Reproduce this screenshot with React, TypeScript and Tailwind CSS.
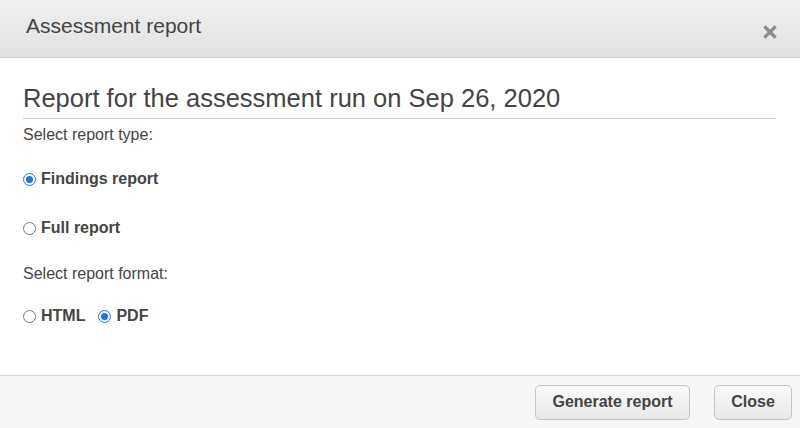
import React from "react";

function Radio({ checked }: { checked: boolean }) {
  return checked ? (
    <span className="inline-flex h-[13px] w-[13px] shrink-0 items-center justify-center rounded-full border-[1.5px] border-[#1a73e8] bg-white">
      <span className="h-[7px] w-[7px] rounded-full bg-[#1a73e8]" />
    </span>
  ) : (
    <span className="inline-block h-[13px] w-[13px] shrink-0 rounded-full border border-[#767676] bg-white" />
  );
}

export default function App() {
  return (
    <div
      className="flex h-[428px] w-[800px] flex-col bg-white text-[#444]"
      style={{ fontFamily: '"Liberation Sans", Arial, sans-serif' }}
    >
      <div className="flex h-[58px] shrink-0 items-start justify-between border-b border-[#cfcfcf] bg-gradient-to-b from-[#f0f0f0] to-[#e1e1e1] pl-[26px] pr-[23px]">
        <div className="pt-[13px] text-[21px] leading-[26px] text-[#444]">Assessment report</div>
        <div className="pt-[25px]">
          <svg width="14" height="14" viewBox="0 0 14 14">
            <path d="M2.5 2.5 L11.5 11.5 M11.5 2.5 L2.5 11.5" stroke="#8a8a8a" strokeWidth="3.2" strokeLinecap="square" />
          </svg>
        </div>
      </div>
      <div className="flex-1 pl-[23px] pr-[24px]">
        <div className="border-b border-[#cccccc] pt-[25px] pb-[4px] text-[25.5px] leading-[31px] text-[#444]">
          Report for the assessment run on Sep 26, 2020
        </div>
        <div className="pt-[7px] text-[16px] leading-[18px]">Select report type:</div>
        <label className="mt-[26px] flex items-center gap-[5px] text-[16px] font-bold leading-[18px]">
          <Radio checked />
          <span>Findings report</span>
        </label>
        <label className="mt-[31px] flex items-center gap-[5px] text-[16px] font-bold leading-[18px]">
          <Radio checked={false} />
          <span>Full report</span>
        </label>
        <div className="mt-[28px] text-[16px] leading-[18px]">Select report format:</div>
        <div className="mt-[24px] flex items-center gap-[13px] text-[16px] font-bold leading-[18px]">
          <label className="flex items-center gap-[5px]">
            <Radio checked={false} />
            <span>HTML</span>
          </label>
          <label className="flex items-center gap-[5px]">
            <Radio checked />
            <span>PDF</span>
          </label>
        </div>
      </div>
      <div className="flex h-[53px] shrink-0 items-center justify-end gap-[24px] border-t border-[#d5d5d5] bg-[#f7f7f7] pr-[8px]">
        <button className="h-[35px] w-[155px] rounded-[5px] border border-[#c4c4c4] bg-gradient-to-b from-[#fafafa] to-[#e9e9e9] text-[16px] font-bold text-[#444]">
          Generate report
        </button>
        <button className="h-[35px] w-[78px] rounded-[5px] border border-[#c4c4c4] bg-gradient-to-b from-[#fafafa] to-[#e9e9e9] text-[16px] font-bold text-[#444]">
          Close
        </button>
      </div>
    </div>
  );
}
